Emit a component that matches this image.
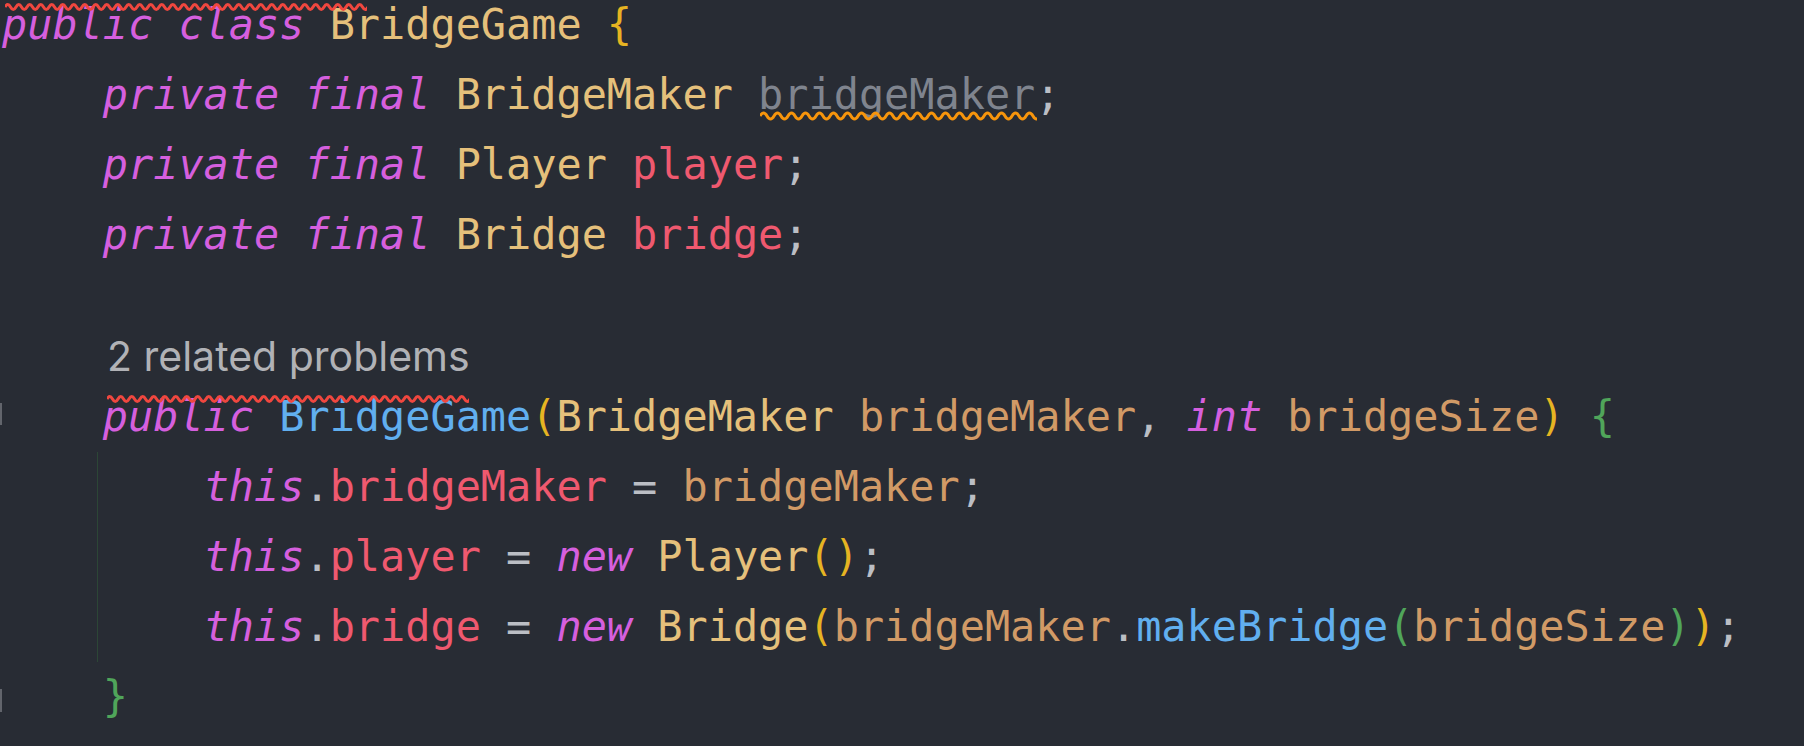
import React from 'react';

const K = ({ children }) => <span className="italic text-[#d55fde]">{children}</span>;
const C = ({ children }) => <span className="text-[#e5c07b]">{children}</span>;
const F = ({ children }) => <span className="text-[#ef596f]">{children}</span>;
const P = ({ children }) => <span className="text-[#d19a66]">{children}</span>;
const M = ({ children }) => <span className="text-[#61afef]">{children}</span>;
const G = ({ children }) => <span className="text-[#bbbec4]">{children}</span>;
const Y = ({ children }) => <span className="text-[#e6b422]">{children}</span>;
const Gr = ({ children }) => <span className="text-[#50a55a]">{children}</span>;

// wavy inspection underline
const Wave = ({ width, color, className, h = 10, step = 5.5 }) => {
    const mid = h / 2;
    let d = `M0 ${mid} Q${step / 2} 0 ${step} ${mid}`;
    for (let x = step * 2; x <= width + step; x += step) d += ` T${x} ${mid}`;
    return (
        <svg className={className} width={width} height={h} viewBox={`0 0 ${width} ${h}`}>
            <path d={d} fill="none" stroke={color} strokeWidth="3" />
        </svg>
    );
};

const Line = ({ children, className = '' }) => (
    <div className={`relative h-[70px] leading-[70px] whitespace-pre ${className}`}>{children}</div>
);

const BridgeGameCode = () => {
    return (
        <div className="w-[1804px] h-[746px] bg-[#282c34] overflow-hidden">
            <div className="mt-[-10px] pl-[2px] text-[41.86px] font-['DejaVu_Sans_Mono',monospace]">
                <Line>
                    <Wave width={362} color="#f0473f" className="absolute left-[3px] top-[12px]" />
                    <K>public</K> <K>class</K> <C>BridgeGame</C> <Y>{'{'}</Y>
                </Line>
                <Line>
                    <Wave width={277} color="#f7950c" h={12} step={7} className="absolute left-[758px] top-[50px]" />
                    {'    '}<K>private</K> <K>final</K> <C>BridgeMaker</C> <span className="text-[#7f848e]">bridgeMaker</span><G>;</G>
                </Line>
                <Line>
                    {'    '}<K>private</K> <K>final</K> <C>Player</C> <F>player</F><G>;</G>
                </Line>
                <Line>
                    {'    '}<K>private</K> <K>final</K> <C>Bridge</C> <F>bridge</F><G>;</G>
                </Line>
                <Line> </Line>

                {/* inlay hint */}
                <div className="h-[42px] leading-[33px] pl-[105px] text-[41px] text-[#b1b2b6] font-['Inter',sans-serif]">
                    2 related problems
                </div>

                <Line>
                    <div className="absolute left-[-2px] top-[21px] w-[2px] h-[22px] bg-[#62656c]" />
                    <Wave width={362} color="#f0473f" className="absolute left-[105px] top-[12px]" />
                    {'    '}<K>public</K> <M>BridgeGame</M><Y>(</Y><C>BridgeMaker</C> <P>bridgeMaker</P><G>,</G> <K>int</K> <P>bridgeSize</P><Y>)</Y> <Gr>{'{'}</Gr>
                </Line>
                <div className="relative">
                    <div className="absolute left-[95px] top-0 bottom-0 w-px bg-[#2c4636]" />
                    <Line>
                        {'        '}<K>this</K><G>.</G><F>bridgeMaker</F> <G>=</G> <P>bridgeMaker</P><G>;</G>
                    </Line>
                    <Line>
                        {'        '}<K>this</K><G>.</G><F>player</F> <G>=</G> <K>new</K> <C>Player</C><Y>()</Y><G>;</G>
                    </Line>
                    <Line>
                        {'        '}<K>this</K><G>.</G><F>bridge</F> <G>=</G> <K>new</K> <C>Bridge</C><Y>(</Y><P>bridgeMaker</P><G>.</G><M>makeBridge</M><Gr>(</Gr><P>bridgeSize</P><Gr>)</Gr><Y>)</Y><G>;</G>
                    </Line>
                </div>
                <Line>
                    <div className="absolute left-[-2px] top-[27px] w-[2px] h-[23px] bg-[#62656c]" />
                    {'    '}<Gr>{'}'}</Gr>
                </Line>
            </div>
        </div>
    );
};

export default BridgeGameCode;
